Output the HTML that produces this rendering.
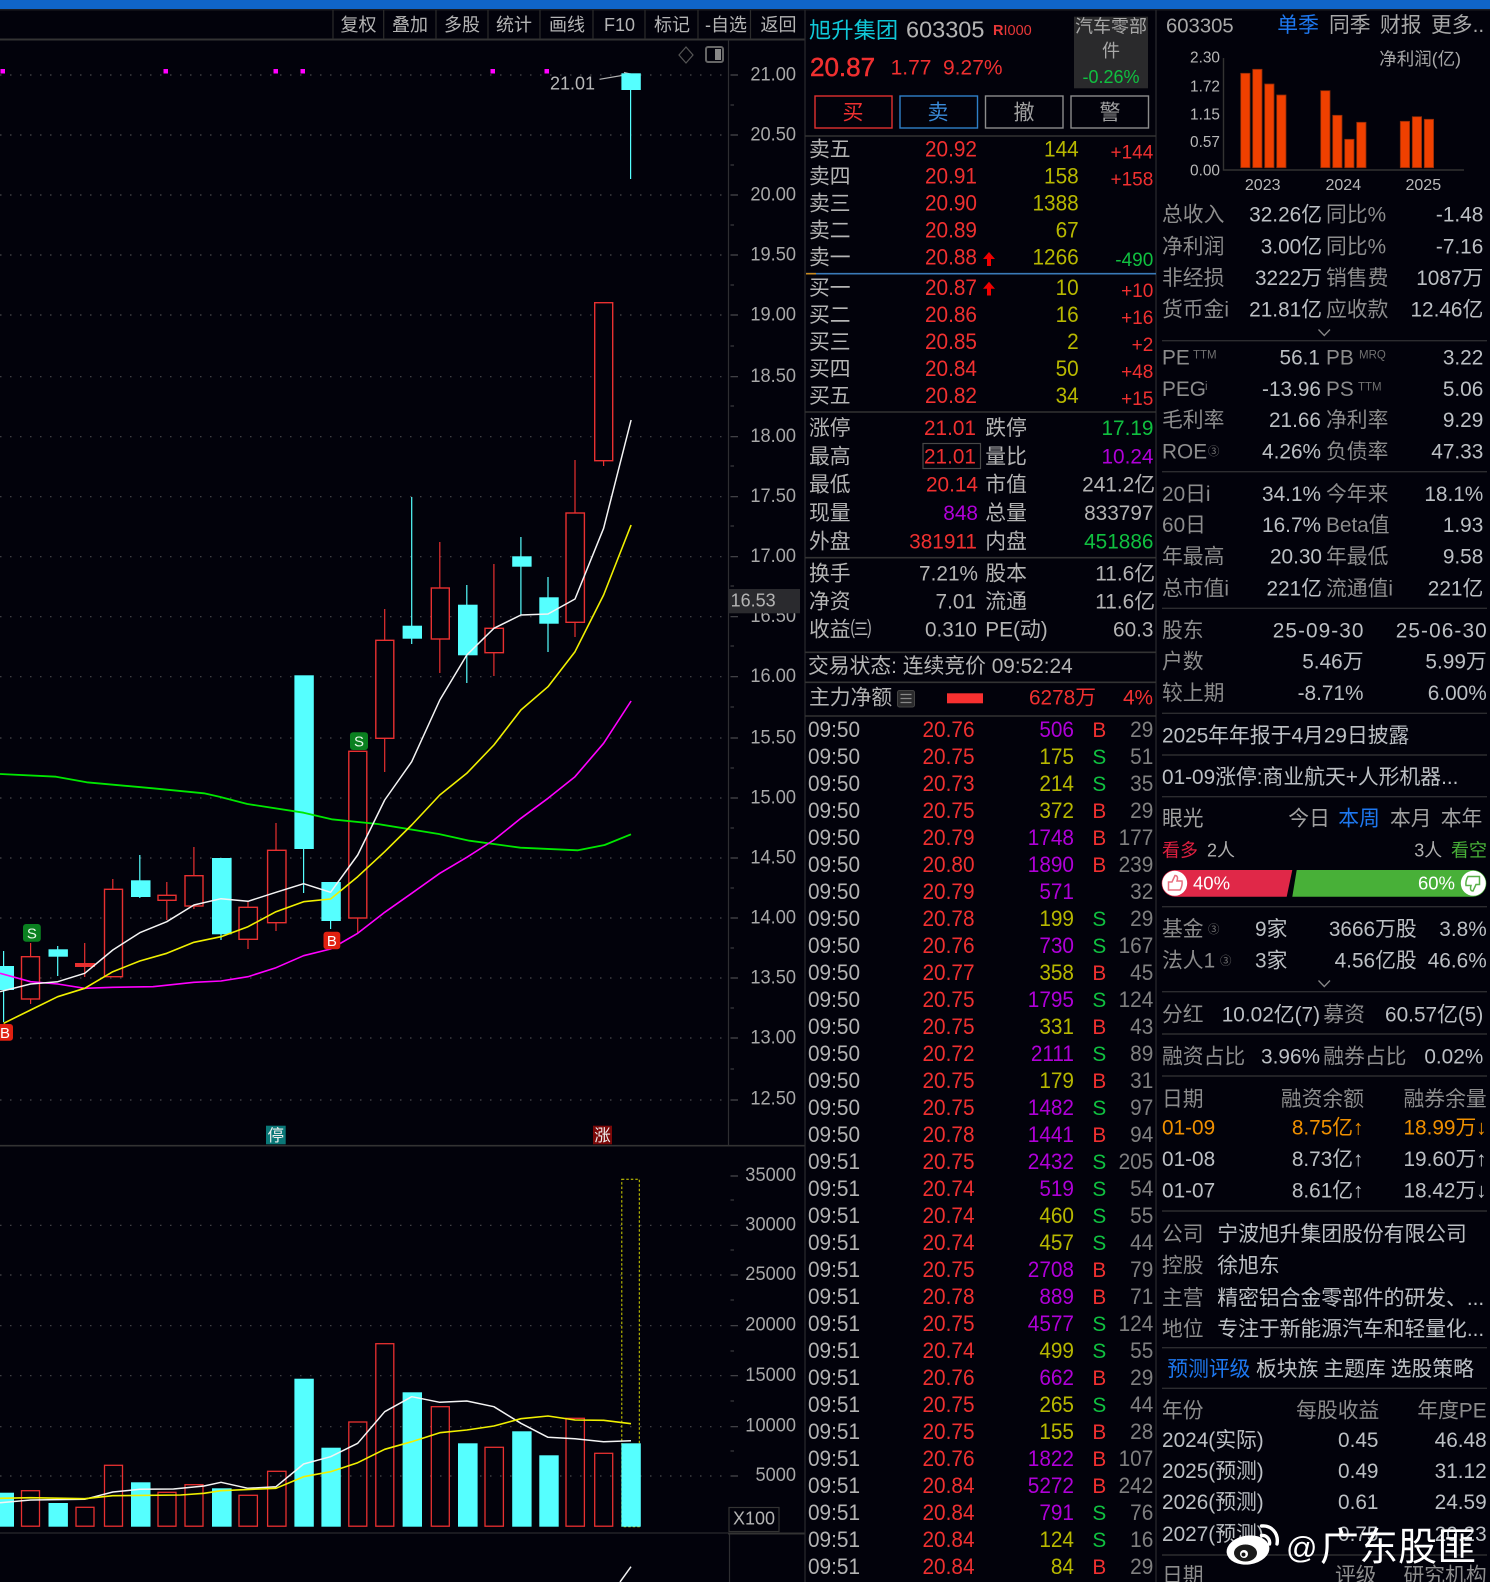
<!DOCTYPE html>
<html><head><meta charset="utf-8"><title>旭升集团 603305</title>
<style>
html,body{margin:0;padding:0;background:#02020b;}
svg{display:block;font-family:"Liberation Sans","Noto Sans CJK SC",sans-serif;font-size:20.8px;}
.e{text-anchor:end}.m{text-anchor:middle}
</style></head><body>
<svg width="1490" height="1582" viewBox="0 0 1490 1582" xmlns="http://www.w3.org/2000/svg">
<rect width="1490" height="1582" fill="#02020b"/>
<rect width="1490" height="9" fill="#1065c8"/>
<rect y="9" width="1490" height="1.5" fill="#1c1c20"/>

<!-- toolbar -->
<path d="M0 39.5H805" stroke="#333" stroke-width="2"/>
<path d="M333 10V39M383.7 10V39M436 10V39M488 10V39M540 10V39M593 10V39M645 10V39M698 10V39M750.5 10V39" stroke="#2c2c2c" stroke-width="1.2"/>
<g font-size="18" fill="#b4b4b4" class="m" text-anchor="middle">
<text x="358.5" y="31">复权</text><text x="410" y="31">叠加</text><text x="462" y="31">多股</text><text x="514" y="31">统计</text><text x="567" y="31">画线</text><text x="619.5" y="31">F10</text><text x="672" y="31">标记</text><text x="726" y="31">-自选</text><text x="778.5" y="31">返回</text>
</g>

<!-- grid -->
<g stroke="#48484c" stroke-width="1.2" stroke-dasharray="1.5 8.5" fill="none">
<path d="M0 75H722M0 135H722M0 195H722M0 255H722M0 315H722M0 376.7H722M0 436.7H722M0 496.7H722M0 556.7H722M0 616.7H722M0 676.7H722M0 738H722M0 798H722M0 858H722M0 918H722M0 978H722M0 1038H722M0 1100H722"/>
<path d="M0 1225.3H722M0 1275H722M0 1325.7H722M0 1375.7H722M0 1426.7H722M0 1476H722"/>
</g>

<!-- axis -->
<path d="M728.5 40V1145M729.5 1533V1582" stroke="#2e2e32" stroke-width="1.2"/>
<path d="M730.5 75H738M730.5 135H738M730.5 195H738M730.5 255H738M730.5 315H738M730.5 376.7H738M730.5 436.7H738M730.5 496.7H738M730.5 556.7H738M730.5 616.7H738M730.5 676.7H738M730.5 738H738M730.5 798H738M730.5 858H738M730.5 918H738M730.5 978H738M730.5 1038H738M730.5 1100H738M730.5 1176H738M730.5 1225.3H738M730.5 1275H738M730.5 1325.7H738M730.5 1375.7H738M730.5 1426.7H738M730.5 1476H738" stroke="#4a4a4e" stroke-width="1.2"/>
<path d="M730.5 105H734M730.5 165H734M730.5 225H734M730.5 285H734M730.5 346H734M730.5 406H734M730.5 466H734M730.5 526H734M730.5 586H734M730.5 646H734M730.5 707H734M730.5 768H734M730.5 828H734M730.5 888H734M730.5 948H734M730.5 1008H734M730.5 1069H734M730.5 1200H734M730.5 1250H734M730.5 1300H734M730.5 1351H734M730.5 1401H734M730.5 1451H734" stroke="#3a3a3e" stroke-width="1.2"/>
<g font-size="19" fill="#a8a8a8" text-anchor="end" transform="matrix(.96 0 0 1 31.84 0)">
<text x="796" y="80.5">21.00</text><text x="796" y="140.5">20.50</text><text x="796" y="200.5">20.00</text><text x="796" y="260.5">19.50</text><text x="796" y="320.5">19.00</text><text x="796" y="382">18.50</text><text x="796" y="442">18.00</text><text x="796" y="502">17.50</text><text x="796" y="562">17.00</text><text x="796" y="622">16.50</text><text x="796" y="682">16.00</text><text x="796" y="743.5">15.50</text><text x="796" y="803.5">15.00</text><text x="796" y="863.5">14.50</text><text x="796" y="923.5">14.00</text><text x="796" y="983.5">13.50</text><text x="796" y="1043.5">13.00</text><text x="796" y="1104.5">12.50</text>
<text x="796" y="1181">35000</text><text x="796" y="1230.5">30000</text><text x="796" y="1280">25000</text><text x="796" y="1330.5">20000</text><text x="796" y="1381">15000</text><text x="796" y="1431.5">10000</text><text x="796" y="1481">5000</text>
</g>
<rect x="728.6" y="589" width="71.4" height="24.3" fill="#2a2a2e"/>
<text x="730.6" y="606.7" font-size="18" fill="#b4b4b4">16.53</text>

<!-- top icons -->
<path d="M686 47L693 55L686 63L679 55Z" fill="none" stroke="#555" stroke-width="1.2"/>
<rect x="706" y="47" width="17" height="15" rx="2" fill="none" stroke="#666" stroke-width="2"/>
<rect x="715" y="49" width="6" height="11" fill="#888"/>
<!-- magenta dots -->
<g fill="#ff00ff"><rect x="0.5" y="69" width="4.5" height="4.5"/><rect x="163.5" y="69" width="4.5" height="4.5"/><rect x="273.5" y="69" width="4.5" height="4.5"/><rect x="300.5" y="69" width="4.5" height="4.5"/><rect x="490.5" y="69" width="4.5" height="4.5"/><rect x="544.5" y="69" width="4.5" height="4.5"/></g>
<text x="550" y="89.3" font-size="18" fill="#b8b8b8">21.01</text>
<path d="M599.5 79.3L630.6 74M624 72.5L630.6 74L625.5 77.5" fill="none" stroke="#b4b4b4" stroke-width="1.2"/>

<!-- wicks -->
<path d="M30.6 943V1004M84.7 943V977M112.8 879V890M166.8 882V920M193.9 847V909M248 902V949M276 823V931M357.7 918V933M384.7 609V772M439.8 542V673M493.9 564V676M575 460V637M603.6 460V466" stroke="#e83030" stroke-width="1.2" fill="none"/>
<path d="M3.6 951V1022M57.7 946V976M139.8 855V898M221 934V940M303.6 849V893M330.6 921V929M411.7 497V644M466.8 585V683M520.9 537V615M548 577V652M630.6 90V179" stroke="#55ffff" stroke-width="1.2" fill="none"/>
<!-- red candles -->
<g fill="#02020b" stroke="#e83030" stroke-width="1.4">
<rect x="21.5" y="956.7" width="18" height="42.3"/><rect x="76" y="964" width="18" height="2" stroke-width="2"/><rect x="104.5" y="889.3" width="18" height="87.4"/><rect x="158" y="895.3" width="18" height="5"/><rect x="185" y="875.7" width="18" height="30.3"/><rect x="239" y="907.3" width="18.4" height="32"/><rect x="267.6" y="850.3" width="18.4" height="72.4"/><rect x="348.8" y="751.3" width="18" height="166.7"/><rect x="375.8" y="640.3" width="18" height="98"/><rect x="431.3" y="588" width="18" height="51"/><rect x="485" y="628.3" width="18.4" height="24.4"/><rect x="566" y="513" width="18.4" height="109.3"/><rect x="594.7" y="302.7" width="18" height="158"/>
</g>
<!-- cyan candles -->
<g fill="#55ffff">
<rect x="-6" y="966" width="20" height="24"/><rect x="48.5" y="949.3" width="19.4" height="7.4"/><rect x="131" y="880.3" width="19.5" height="16.7"/><rect x="212" y="858" width="19.6" height="76.3"/><rect x="294.4" y="675.3" width="19.4" height="173.7"/><rect x="321.4" y="882" width="19.4" height="39"/><rect x="402.6" y="625.7" width="19.4" height="13"/><rect x="458" y="604.7" width="19.6" height="50.6"/><rect x="512.2" y="556.3" width="19.4" height="10.4"/><rect x="539.3" y="597.3" width="19.4" height="26.4"/><rect x="621.4" y="73.3" width="19.4" height="16.7"/>
</g>
<!-- MA lines -->
<g fill="none" stroke-width="1.5" stroke-linejoin="round">
<polyline stroke="#00e800" stroke-width="1.8" points="0,774 56,776.7 86.7,782.3 153,788.3 204,793.3 219.4,796.7 247.4,804 303.6,812.7 331.6,819.3 377.6,824 438.8,834 469.4,840.7 520.4,847.7 578,850.3 604.6,845 631,834.3"/>
<polyline stroke="#ff00ff" stroke-width="1.6" points="0,973.3 30.6,981.7 57.7,984 84.7,988.3 112.8,987.3 153,986.7 193.9,982.3 221,981 248,976.7 276,967.7 303.6,955.7 330.6,949 357.7,933.3 384.7,912.3 411.7,893.3 439.8,873.3 466.8,857.3 493.9,840 520.9,818.3 548,798.3 575,776.7 603.6,743.3 631.1,701"/>
<polyline stroke="#f0f000" stroke-width="1.6" points="3.6,1023.3 30.6,1010 57.7,996.7 84.7,988.3 112.8,971.7 139.8,961 166.8,953.3 193.9,942.3 221,936.7 248,926.7 276,911.7 303.6,901.7 330.6,899 357.7,876.7 384.7,851.7 411.7,825 439.8,795 466.8,773.3 493.9,745 520.9,710 548,686.7 575,651.7 603.6,595 631.1,525"/>
<polyline stroke="#f4f4f4" stroke-width="1.5" points="0,991.7 30.6,984 57.7,981.7 84.7,973.3 112.8,950 139.8,932.7 166.8,921.7 193.9,905 221,898.7 248,901.3 276,892.3 303.6,883.7 330.6,892.3 357.7,855 384.7,800 411.7,761.7 439.8,700 466.8,655 493.9,628.3 520.9,615 548,614 575,599 603.6,528.3 631.1,420"/>
</g>
<!-- B/S markers -->
<g font-size="15" text-anchor="middle" fill="#e8f8e8">
<rect x="23" y="924" width="17.8" height="17.7" rx="3" fill="#0a8020"/><text x="31.9" y="938.5">S</text>
<rect x="350" y="732.3" width="18" height="17.7" rx="3" fill="#0a8020"/><text x="359" y="746.5">S</text>
<rect x="323.5" y="931.7" width="16.8" height="17.6" rx="3" fill="#e02010"/><text x="331.9" y="946" fill="#fff">B</text>
<rect x="-4" y="1024" width="17" height="16.7" rx="3" fill="#e02010"/><text x="5" y="1038" fill="#fff">B</text>
</g>
<rect x="266" y="1125.7" width="19.7" height="18.6" fill="#0a7878"/><text x="275.8" y="1141" font-size="16.5" text-anchor="middle" fill="#eee">停</text>
<rect x="593" y="1125.7" width="19" height="18.6" fill="#7a0808"/><text x="602.5" y="1141" font-size="16.5" text-anchor="middle" fill="#eee">涨</text>
<path d="M0 1145.7H805" stroke="#333" stroke-width="1.6"/>

<!-- volume -->
<rect x="621.8" y="1179.3" width="17.5" height="347.4" fill="none" stroke="#d8d800" stroke-width="1" stroke-dasharray="2.5 2"/>
<g fill="#55ffff">
<rect x="-6" y="1492.7" width="20" height="34"/><rect x="48.5" y="1503" width="19.4" height="23.7"/><rect x="131" y="1482.3" width="19.5" height="44.4"/><rect x="212" y="1488.3" width="19.6" height="38.4"/><rect x="294.4" y="1378.7" width="19.4" height="148"/><rect x="321.4" y="1447.7" width="19.4" height="79"/><rect x="402.6" y="1392.3" width="19.4" height="134.4"/><rect x="458" y="1443.3" width="19.6" height="83.4"/><rect x="512.2" y="1431.3" width="19.4" height="95.4"/><rect x="539.3" y="1455.3" width="19.4" height="71.4"/><rect x="621.4" y="1443.3" width="19.4" height="83.4"/>
</g>
<g fill="none" stroke="#e83030" stroke-width="1.3">
<rect x="21.5" y="1490.7" width="18" height="35.5"/><rect x="76" y="1507.3" width="18" height="18.9"/><rect x="104.5" y="1465.3" width="18" height="60.9"/><rect x="158" y="1492.3" width="18" height="33.9"/><rect x="185" y="1484.7" width="18" height="41.5"/><rect x="239" y="1495.3" width="18.4" height="30.9"/><rect x="267.6" y="1471.3" width="18.4" height="54.9"/><rect x="348.8" y="1422" width="18" height="104.2"/><rect x="375.8" y="1343.7" width="18" height="182.5"/><rect x="431.3" y="1406.7" width="18" height="119.5"/><rect x="485" y="1447.3" width="18.4" height="78.9"/><rect x="566" y="1418.3" width="18.4" height="107.9"/><rect x="594.7" y="1453.3" width="18" height="72.9"/>
</g>
<g fill="none" stroke-linejoin="round">
<polyline stroke="#f4f4f4" stroke-width="1.5" points="0,1502.7 30.6,1500 84.7,1499.3 112.8,1492 139.8,1489.3 173.5,1489 204,1486 221,1482.3 248,1488.3 276,1486.7 303.6,1464 330.6,1456.7 357.7,1443.3 384.7,1411.7 411.7,1396.7 439.8,1402.3 466.8,1401 493.9,1406.7 520.9,1423.3 548,1437.3 575,1438.7 603.6,1441.7 631,1440.7"/>
<polyline stroke="#f0f000" stroke-width="1.6" points="0,1498.3 30.6,1497.7 84.7,1498.7 112.8,1495.7 180.6,1495 204,1493.3 221,1490.7 276,1488.3 303.6,1476.7 330.6,1471.7 357.7,1462.7 384.7,1449.3 411.7,1441.7 439.8,1432.7 466.8,1430 493.9,1426 520.9,1418.7 548,1416 575,1420 603.6,1420.3 631,1423.7"/>
</g>
<rect x="729" y="1507.5" width="50" height="24" fill="#02020b" stroke="#333" stroke-width="1.2"/>
<text x="733" y="1524.5" font-size="18" fill="#b4b4b4">X100</text>
<path d="M0 1533H728" stroke="#2a2a2e" stroke-width="1.2"/>
<path d="M728 1533.5H805" stroke="#333" stroke-width="2"/>
<path d="M631 1566.7L620 1582" stroke="#f0f0f0" stroke-width="1.5" fill="none"/>

<!-- panel borders -->
<path d="M805 10V1582M1156 10V1582" stroke="#2a2a2e" stroke-width="1.2"/>

<!-- quote header -->
<text x="809" y="38" font-size="22.3" fill="#10c8d8">旭升集团</text>
<text x="906" y="37.7" font-size="23.5" fill="#b4b4b4">603305</text>
<text x="993" y="35" font-size="14.5" fill="#e83838"><tspan font-weight="bold">R</tspan>I000</text>
<text x="810" y="76" font-size="26" fill="#f03030" stroke="#f03030" stroke-width=".5">20.87</text>
<text x="890.6" y="74.7" font-size="21" fill="#f03030">1.77</text>
<text x="943" y="74.7" font-size="21" fill="#f03030">9.27%</text>
<rect x="1074" y="16.7" width="74" height="71.6" fill="#2a2a2c"/>
<g font-size="18" text-anchor="middle" fill="#a8a8a8"><text x="1111" y="32.5">汽车零部</text><text x="1111" y="57">件</text><text x="1111" y="83" fill="#10c040">-0.26%</text></g>
<g fill="none" stroke-width="1.4">
<rect x="815" y="96" width="77" height="32" stroke="#e03030"/><rect x="900" y="96" width="77.5" height="32" stroke="#2f7fc8"/><rect x="985.5" y="96" width="77.5" height="32" stroke="#8c8c8c"/><rect x="1071" y="96" width="77.5" height="32" stroke="#8c8c8c"/>
</g>
<g font-size="21" text-anchor="middle">
<text x="853" y="119.5" fill="#f03030">买</text><text x="938" y="119.5" fill="#3a8ad8">卖</text><text x="1024" y="119.5" fill="#a0a0a0">撤</text><text x="1110" y="119.5" fill="#a0a0a0">警</text>
</g>
<path d="M805 136H1156M805 412H1156M805 557.7H1156M805 652.3H1156M805 682.3H1156M805 716H1156" stroke="#333" stroke-width="1.6"/>
<path d="M806 273.7H1156" stroke="#3a7ab8" stroke-width="1.6"/><path d="M806 273.7H816" stroke="#c88a20" stroke-width="1.6"/>

<!-- order book -->
<g fill="#b4b4b4"><text x="809" y="156.5">卖五</text><text x="809" y="183.5">卖四</text><text x="809" y="210.5">卖三</text><text x="809" y="237.5">卖二</text><text x="809" y="264.5">卖一</text><text x="809" y="295">买一</text><text x="809" y="322">买二</text><text x="809" y="349">买三</text><text x="809" y="376">买四</text><text x="809" y="403">买五</text></g>
<g fill="#f03030" text-anchor="end" font-size="22" transform="matrix(.945 0 0 1 53.74 0)"><text x="977" y="156.5">20.92</text><text x="977" y="183.5">20.91</text><text x="977" y="210.5">20.90</text><text x="977" y="237.5">20.89</text><text x="977" y="264.5">20.88</text><text x="977" y="295">20.87</text><text x="977" y="322">20.86</text><text x="977" y="349">20.85</text><text x="977" y="376">20.84</text><text x="977" y="403">20.82</text></g>
<path d="M989 252L995 259H991V266H987V259H983ZM989 281.7L995 288.7H991V295.5H987V288.7H983Z" fill="#f00000"/>
<g fill="#b8b800" text-anchor="end" font-size="22" transform="matrix(.945 0 0 1 59.33 0)"><text x="1078.7" y="156.5">144</text><text x="1078.7" y="183.5">158</text><text x="1078.7" y="210.5">1388</text><text x="1078.7" y="237.5">67</text><text x="1078.7" y="264.5">1266</text><text x="1078.7" y="295">10</text><text x="1078.7" y="322">16</text><text x="1078.7" y="349">2</text><text x="1078.7" y="376">50</text><text x="1078.7" y="403">34</text></g>
<g font-size="19" fill="#f03030" text-anchor="end"><text x="1153.3" y="158.5">+144</text><text x="1153.3" y="185.5">+158</text><text x="1153.3" y="266" fill="#10c040">-490</text><text x="1153.3" y="297">+10</text><text x="1153.3" y="324">+16</text><text x="1153.3" y="351">+2</text><text x="1153.3" y="378">+48</text><text x="1153.3" y="405">+15</text></g>

<!-- stats -->
<g fill="#b4b4b4"><text x="809" y="435">涨停</text><text x="809" y="463.3">最高</text><text x="809" y="491.7">最低</text><text x="809" y="520">现量</text><text x="809" y="548.3">外盘</text><text x="809" y="580.3">换手</text><text x="809" y="608.3">净资</text><text x="809" y="636.5">收益㈢</text>
<text x="985.3" y="435">跌停</text><text x="985.3" y="463.3">量比</text><text x="985.3" y="491.7">市值</text><text x="985.3" y="520">总量</text><text x="985.3" y="548.3">内盘</text><text x="985.3" y="580.3">股本</text><text x="985.3" y="608.3">流通</text><text x="985.3" y="636.5">PE(动)</text></g>
<rect x="923" y="443.5" width="57.5" height="25" fill="none" stroke="#484848" stroke-width="1.2"/>
<g text-anchor="end"><text x="976" y="435" fill="#f03030">21.01</text><text x="976" y="463.3" fill="#f03030">21.01</text><text x="978" y="491.7" fill="#f03030">20.14</text><text x="978" y="520" fill="#b000d8">848</text><text x="977" y="548.3" fill="#f03030">381911</text><text x="978" y="580.3" fill="#b4b4b4">7.21%</text><text x="976" y="608.3" fill="#b4b4b4">7.01</text><text x="977" y="636.5" fill="#b4b4b4">0.310</text>
<text x="1153.5" y="435" fill="#10c040">17.19</text><text x="1153.5" y="463.3" fill="#b000d8">10.24</text><text x="1155" y="491.7" fill="#b4b4b4">241.2亿</text><text x="1153.5" y="520" fill="#b4b4b4">833797</text><text x="1153.5" y="548.3" fill="#10c040">451886</text><text x="1155" y="580.3" fill="#b4b4b4">11.6亿</text><text x="1155" y="608.3" fill="#b4b4b4">11.6亿</text><text x="1153.5" y="636.5" fill="#b4b4b4">60.3</text></g>
<text x="808" y="673" fill="#b4b4b4">交易状态: 连续竞价 09:52:24</text>
<text x="809" y="704.7" fill="#b4b4b4">主力净额</text>
<rect x="897.5" y="690.5" width="17" height="16.5" rx="2" fill="#2a2a2c" stroke="#444" stroke-width="1"/><path d="M900.5 694.5H911.5M900.5 698.5H911.5M900.5 702.5H911.5" stroke="#888" stroke-width="1.2"/>
<rect x="947" y="693.3" width="36" height="10" fill="#f83030"/>
<text x="1096" y="704.7" class="e" fill="#f03030">6278万</text><text x="1153" y="704.7" class="e" fill="#f03030">4%</text>

<!-- ticks -->
<g fill="#b4b4b4" font-size="22" transform="matrix(.945 0 0 1 44.44 0)"><text x="808" y="737">09:50</text><text x="808" y="764">09:50</text><text x="808" y="791">09:50</text><text x="808" y="818">09:50</text><text x="808" y="845">09:50</text><text x="808" y="872">09:50</text><text x="808" y="899">09:50</text><text x="808" y="926">09:50</text><text x="808" y="953">09:50</text><text x="808" y="980">09:50</text><text x="808" y="1007">09:50</text><text x="808" y="1034">09:50</text><text x="808" y="1061">09:50</text><text x="808" y="1088">09:50</text><text x="808" y="1115">09:50</text><text x="808" y="1142">09:50</text><text x="808" y="1169">09:51</text><text x="808" y="1196">09:51</text><text x="808" y="1223">09:51</text><text x="808" y="1250">09:51</text><text x="808" y="1277">09:51</text><text x="808" y="1304">09:51</text><text x="808" y="1331">09:51</text><text x="808" y="1358">09:51</text><text x="808" y="1385">09:51</text><text x="808" y="1412">09:51</text><text x="808" y="1439">09:51</text><text x="808" y="1466">09:51</text><text x="808" y="1493">09:51</text><text x="808" y="1520">09:51</text><text x="808" y="1547">09:51</text><text x="808" y="1574">09:51</text></g>
<g fill="#f03030" text-anchor="end" font-size="22" transform="matrix(.945 0 0 1 53.6 0)"><text x="974.5" y="737">20.76</text><text x="974.5" y="764">20.75</text><text x="974.5" y="791">20.73</text><text x="974.5" y="818">20.75</text><text x="974.5" y="845">20.79</text><text x="974.5" y="872">20.80</text><text x="974.5" y="899">20.79</text><text x="974.5" y="926">20.78</text><text x="974.5" y="953">20.76</text><text x="974.5" y="980">20.77</text><text x="974.5" y="1007">20.75</text><text x="974.5" y="1034">20.75</text><text x="974.5" y="1061">20.72</text><text x="974.5" y="1088">20.75</text><text x="974.5" y="1115">20.75</text><text x="974.5" y="1142">20.78</text><text x="974.5" y="1169">20.75</text><text x="974.5" y="1196">20.74</text><text x="974.5" y="1223">20.74</text><text x="974.5" y="1250">20.74</text><text x="974.5" y="1277">20.75</text><text x="974.5" y="1304">20.78</text><text x="974.5" y="1331">20.75</text><text x="974.5" y="1358">20.74</text><text x="974.5" y="1385">20.76</text><text x="974.5" y="1412">20.75</text><text x="974.5" y="1439">20.75</text><text x="974.5" y="1466">20.76</text><text x="974.5" y="1493">20.84</text><text x="974.5" y="1520">20.84</text><text x="974.5" y="1547">20.84</text><text x="974.5" y="1574">20.84</text></g>
<g text-anchor="end" fill="#b000d8" font-size="22" transform="matrix(.945 0 0 1 59.07 0)"><text x="1074" y="737">506</text><text x="1074" y="845">1748</text><text x="1074" y="872">1890</text><text x="1074" y="899">571</text><text x="1074" y="953">730</text><text x="1074" y="1007">1795</text><text x="1074" y="1061">2111</text><text x="1074" y="1115">1482</text><text x="1074" y="1142">1441</text><text x="1074" y="1169">2432</text><text x="1074" y="1196">519</text><text x="1074" y="1277">2708</text><text x="1074" y="1304">889</text><text x="1074" y="1331">4577</text><text x="1074" y="1385">662</text><text x="1074" y="1466">1822</text><text x="1074" y="1493">5272</text><text x="1074" y="1520">791</text></g>
<g text-anchor="end" fill="#b8b800" font-size="22" transform="matrix(.945 0 0 1 59.07 0)"><text x="1074" y="764">175</text><text x="1074" y="791">214</text><text x="1074" y="818">372</text><text x="1074" y="926">199</text><text x="1074" y="980">358</text><text x="1074" y="1034">331</text><text x="1074" y="1088">179</text><text x="1074" y="1223">460</text><text x="1074" y="1250">457</text><text x="1074" y="1358">499</text><text x="1074" y="1412">265</text><text x="1074" y="1439">155</text><text x="1074" y="1547">124</text><text x="1074" y="1574">84</text></g>
<g text-anchor="middle" fill="#f03030"><text x="1099.3" y="737">B</text><text x="1099.3" y="818">B</text><text x="1099.3" y="845">B</text><text x="1099.3" y="872">B</text><text x="1099.3" y="980">B</text><text x="1099.3" y="1034">B</text><text x="1099.3" y="1088">B</text><text x="1099.3" y="1142">B</text><text x="1099.3" y="1277">B</text><text x="1099.3" y="1304">B</text><text x="1099.3" y="1385">B</text><text x="1099.3" y="1439">B</text><text x="1099.3" y="1466">B</text><text x="1099.3" y="1493">B</text><text x="1099.3" y="1574">B</text></g>
<g text-anchor="middle" fill="#10c040"><text x="1099.3" y="764">S</text><text x="1099.3" y="791">S</text><text x="1099.3" y="926">S</text><text x="1099.3" y="953">S</text><text x="1099.3" y="1007">S</text><text x="1099.3" y="1061">S</text><text x="1099.3" y="1115">S</text><text x="1099.3" y="1169">S</text><text x="1099.3" y="1196">S</text><text x="1099.3" y="1223">S</text><text x="1099.3" y="1250">S</text><text x="1099.3" y="1331">S</text><text x="1099.3" y="1358">S</text><text x="1099.3" y="1412">S</text><text x="1099.3" y="1520">S</text><text x="1099.3" y="1547">S</text></g>
<g text-anchor="end" fill="#808080" font-size="22" transform="matrix(.945 0 0 1 63.43 0)"><text x="1153.3" y="737">29</text><text x="1153.3" y="764">51</text><text x="1153.3" y="791">35</text><text x="1153.3" y="818">29</text><text x="1153.3" y="845">177</text><text x="1153.3" y="872">239</text><text x="1153.3" y="899">32</text><text x="1153.3" y="926">29</text><text x="1153.3" y="953">167</text><text x="1153.3" y="980">45</text><text x="1153.3" y="1007">124</text><text x="1153.3" y="1034">43</text><text x="1153.3" y="1061">89</text><text x="1153.3" y="1088">31</text><text x="1153.3" y="1115">97</text><text x="1153.3" y="1142">94</text><text x="1153.3" y="1169">205</text><text x="1153.3" y="1196">54</text><text x="1153.3" y="1223">55</text><text x="1153.3" y="1250">44</text><text x="1153.3" y="1277">79</text><text x="1153.3" y="1304">71</text><text x="1153.3" y="1331">124</text><text x="1153.3" y="1358">55</text><text x="1153.3" y="1385">29</text><text x="1153.3" y="1412">44</text><text x="1153.3" y="1439">28</text><text x="1153.3" y="1466">107</text><text x="1153.3" y="1493">242</text><text x="1153.3" y="1520">76</text><text x="1153.3" y="1547">16</text><text x="1153.3" y="1574">29</text></g>

<!-- right panel header -->
<text x="1166" y="32.3" fill="#a8a8a8" font-size="20.3">603305</text>
<text x="1277.3" y="32" fill="#1e78f0">单季</text><g fill="#a8a8a8"><text x="1329" y="32">同季</text><text x="1380" y="32">财报</text><text x="1431" y="32">更多..</text></g>
<!-- mini chart -->
<path d="M1223.5 58V170H1464" fill="none" stroke="#333" stroke-width="1.4"/>
<g fill="#f04000" stroke="#8a2a08" stroke-width=".8">
<rect x="1240.7" y="73.3" width="9.3" height="94.4"/><rect x="1252.7" y="69.3" width="9.3" height="98.4"/><rect x="1264.7" y="84" width="9.3" height="83.7"/><rect x="1276.7" y="95" width="9.3" height="72.7"/>
<rect x="1320.7" y="90.7" width="9.3" height="77"/><rect x="1332.7" y="115.3" width="9.3" height="52.4"/><rect x="1344.7" y="139.3" width="9.3" height="28.4"/><rect x="1356.7" y="122.3" width="9.3" height="45.4"/>
<rect x="1400.3" y="121.3" width="9.3" height="46.4"/><rect x="1412.3" y="116.7" width="9.3" height="51"/><rect x="1424.3" y="119.3" width="9.3" height="48.4"/>
</g>
<g font-size="15.4" fill="#b8b8b8" text-anchor="end"><text x="1220" y="62.7">2.30</text><text x="1220" y="91.4">1.72</text><text x="1220" y="119.7">1.15</text><text x="1220" y="147">0.57</text><text x="1220" y="175.4">0.00</text></g>
<g font-size="16" fill="#b8b8b8" text-anchor="middle"><text x="1262.7" y="190">2023</text><text x="1343.3" y="190">2024</text><text x="1423.3" y="190">2025</text></g>
<text x="1379.3" y="65" font-size="17.5" fill="#a8a8a8">净利润(亿)</text>

<!-- right panel separators -->
<path d="M1162 340.7H1487M1162 471.7H1487M1162 608.3H1487M1162 713.3H1487M1162 755H1487M1162 796.7H1487M1162 906.7H1487M1162 991.7H1487M1162 1034H1487M1162 1076H1487M1162 1211H1487M1162 1347.7H1487M1162 1388.3H1487M1162 1555H1487" stroke="#2c2c30" stroke-width="1.4"/>

<!-- labels -->
<g fill="#8c8c8c">
<text x="1162" y="221.7">总收入</text><text x="1162" y="253.7">净利润</text><text x="1162" y="285">非经损</text><text x="1162" y="316.7">货币金i</text>
<text x="1326" y="221.7">同比%</text><text x="1326" y="253.7">同比%</text><text x="1326" y="285">销售费</text><text x="1326" y="316.7">应收款</text>
<text x="1162" y="364.3">PE</text><text x="1162" y="396">PEG</text><text x="1162" y="427">毛利率</text><text x="1162" y="458.3">ROE</text>
<text x="1326" y="364.3">PB</text><text x="1326" y="396">PS</text><text x="1326" y="427">净利率</text><text x="1326" y="458.3">负债率</text>
<text x="1162" y="501">20日i</text><text x="1162" y="532">60日</text><text x="1162" y="563.7">年最高</text><text x="1162" y="595.3">总市值i</text>
<text x="1326" y="501">今年来</text><text x="1326" y="532">Beta值</text><text x="1326" y="563.7">年最低</text><text x="1326" y="595.3">流通值i</text>
<text x="1162" y="637.5">股东</text><text x="1162" y="668.5">户数</text><text x="1162" y="700">较上期</text>
<text x="1162" y="825.5" fill="#a0a0a0">眼光</text>
<text x="1162" y="936">基金</text><text x="1162" y="967.5">法人1</text>
<text x="1162" y="1021.5">分红</text><text x="1323.3" y="1021.5">募资</text>
<text x="1162" y="1063.5">融资占比</text><text x="1323.3" y="1063.5">融券占比</text>
<text x="1162" y="1106">日期</text>
<text x="1162" y="1241">公司</text><text x="1162" y="1272.5">控股</text><text x="1162" y="1305">主营</text><text x="1162" y="1336">地位</text>
<text x="1162" y="1417.5">年份</text>
<text x="1162" y="1582.5">日期</text><text x="1335" y="1582.5">评级</text><text x="1486.7" y="1582.5" class="e">研究机构</text>
<text x="1379.3" y="1417.5" class="e">每股收益</text><text x="1486.7" y="1417.5" class="e">年度PE</text>
<text x="1364" y="1106" class="e">融资余额</text><text x="1486.7" y="1106" class="e">融券余量</text>
</g>
<g font-size="11.5" fill="#707070"><text x="1193" y="358.5">TTM</text><text x="1359" y="358.5">MRQ</text><text x="1205" y="390">i</text><text x="1358" y="390.5">TTM</text><text x="1208" y="455">③</text><text x="1208" y="933">③</text><text x="1220" y="964.5">③</text></g>
<path d="M1318.5 329.5L1324.3 335.5L1330 329.5M1318.5 980.5L1324.3 986.5L1330 980.5" fill="none" stroke="#888" stroke-width="1.3"/>

<!-- values -->
<g fill="#bcc0c4" text-anchor="end">
<text x="1322" y="221.7">32.26亿</text><text x="1322" y="253.7">3.00亿</text><text x="1322" y="285">3222万</text><text x="1322" y="316.7">21.81亿</text>
<text x="1483.3" y="221.7">-1.48</text><text x="1483.3" y="253.7">-7.16</text><text x="1483.3" y="285">1087万</text><text x="1483.3" y="316.7">12.46亿</text>
<text x="1320" y="364.3">56.1</text><text x="1321" y="396">-13.96</text><text x="1321" y="427">21.66</text><text x="1321" y="458.3">4.26%</text>
<text x="1483.3" y="364.3">3.22</text><text x="1483.3" y="396">5.06</text><text x="1483.3" y="427">9.29</text><text x="1483.3" y="458.3">47.33</text>
<text x="1321" y="501">34.1%</text><text x="1321" y="532">16.7%</text><text x="1322" y="563.7">20.30</text><text x="1322" y="595.3">221亿</text>
<text x="1483.3" y="501">18.1%</text><text x="1483.3" y="532">1.93</text><text x="1483.3" y="563.7">9.58</text><text x="1483.3" y="595.3">221亿</text>
<text x="1363.5" y="637.5" textLength="90.7">25-09-30</text><text x="1486.7" y="637.5" textLength="91">25-06-30</text>
<text x="1363.5" y="668.5">5.46万</text><text x="1486.7" y="668.5">5.99万</text>
<text x="1363.5" y="700">-8.71%</text><text x="1486.7" y="700">6.00%</text>
<text x="1416.7" y="936">3666万股</text><text x="1486.7" y="936">3.8%</text>
<text x="1416.7" y="967.5">4.56亿股</text><text x="1486.7" y="967.5">46.6%</text>
<text x="1320" y="1021.5">10.02亿(7)</text><text x="1483.3" y="1021.5">60.57亿(5)</text>
<text x="1320" y="1063.5">3.96%</text><text x="1483.3" y="1063.5">0.02%</text>
<text x="1363.5" y="1166">8.73亿↑</text><text x="1486.7" y="1166">19.60万↑</text>
<text x="1363.5" y="1197.5">8.61亿↑</text><text x="1486.7" y="1197.5">18.42万↓</text>
<text x="1378.5" y="1447">0.45</text><text x="1486.7" y="1447">46.48</text>
<text x="1378.5" y="1478">0.49</text><text x="1486.7" y="1478">31.12</text>
<text x="1378.5" y="1509">0.61</text><text x="1486.7" y="1509">24.59</text>
<text x="1378.5" y="1541">0.75</text><text x="1486.7" y="1541">20.23</text>
</g>
<g fill="#bcc0c4">
<text x="1162" y="742.5">2025年年报于4月29日披露</text>
<text x="1162" y="784">01-09涨停:商业航天+人形机器...</text>
<text x="1288.3" y="825.5" fill="#a0a0a0">今日</text><text x="1338.3" y="825.5" fill="#1e78f0">本周</text><text x="1390" y="825.5" fill="#a0a0a0">本月</text><text x="1440.7" y="825.5" fill="#a0a0a0">本年</text>
<text x="1255" y="936">9家</text><text x="1255" y="967.5">3家</text>
<text x="1162" y="1166">01-08</text><text x="1162" y="1197.5">01-07</text>
<text x="1217.3" y="1241">宁波旭升集团股份有限公司</text><text x="1217.3" y="1272.5">徐旭东</text><text x="1217.3" y="1305">精密铝合金零部件的研发、...</text><text x="1217.3" y="1336">专注于新能源汽车和轻量化...</text>
<text x="1167.3" y="1376" fill="#1e78f0">预测评级</text><text x="1256" y="1376">板块族</text><text x="1323.3" y="1376">主题库</text><text x="1390.7" y="1376">选股策略</text>
<text x="1162" y="1447">2024(实际)</text><text x="1162" y="1478">2025(预测)</text><text x="1162" y="1509">2026(预测)</text><text x="1162" y="1541">2027(预测)</text>
</g>
<g fill="#f09000"><text x="1162" y="1134.3">01-09</text><text x="1363.5" y="1134.3" class="e">8.75亿↑</text><text x="1486.7" y="1134.3" class="e">18.99万↓</text></g>

<!-- bull/bear -->
<g font-size="18"><text x="1162" y="856.5" fill="#e02040">看多</text><text x="1207" y="856.5" fill="#b0b0b0">2人</text><text x="1414.3" y="856.5" fill="#b0b0b0">3人</text><text x="1451" y="856.5" fill="#48b038">看空</text></g>
<path d="M1175 870H1292.3L1286.7 896.7H1175A13.3 13.3 0 0 1 1175 870Z" fill="#e02848"/>
<path d="M1296.7 870H1473A13.3 13.3 0 0 1 1473 896.7H1292.3Z" fill="#48b038"/>
<circle cx="1174.7" cy="883.3" r="12.5" fill="#fff"/><circle cx="1473.3" cy="883.3" r="12.5" fill="#fff"/>
<path d="M1168.5 882H1172L1175 875.5C1177.5 875.5 1178 877.5 1177 881H1182C1182.5 884 1181.5 888 1180 890H1168.5Z" fill="none" stroke="#e87080" stroke-width="1.5"/>
<path d="M1479.5 884.5H1476L1473 891C1470.5 891 1470 889 1471 885.5H1466C1465.5 882.5 1466.5 878.5 1468 876.5H1479.5Z" fill="none" stroke="#58b048" stroke-width="1.5"/>
<g font-size="18.5" fill="#fff"><text x="1193" y="889.5">40%</text><text x="1455" y="889.5" text-anchor="end">60%</text></g>

<!-- watermark -->
<ellipse cx="1248" cy="1550" rx="21.5" ry="14.5" fill="#fff" transform="rotate(-8 1248 1550)"/>
<ellipse cx="1245.5" cy="1553" rx="11.5" ry="8.5" fill="#1a1a1a"/>
<circle cx="1244" cy="1554" r="4" fill="#fff"/><circle cx="1243.5" cy="1554.5" r="2" fill="#111"/>
<path d="M1261.5 1526C1271 1525 1279 1533 1277 1544M1261.5 1535.5C1266 1535 1270.5 1539 1269.5 1544" fill="none" stroke="#fff" stroke-width="3.4" stroke-linecap="round"/>
<text x="1286" y="1558" font-size="31" fill="#fff">@</text>
<text x="1320" y="1560.5" font-size="39" fill="#fff">广东股匪</text>
</svg>
</body></html>
